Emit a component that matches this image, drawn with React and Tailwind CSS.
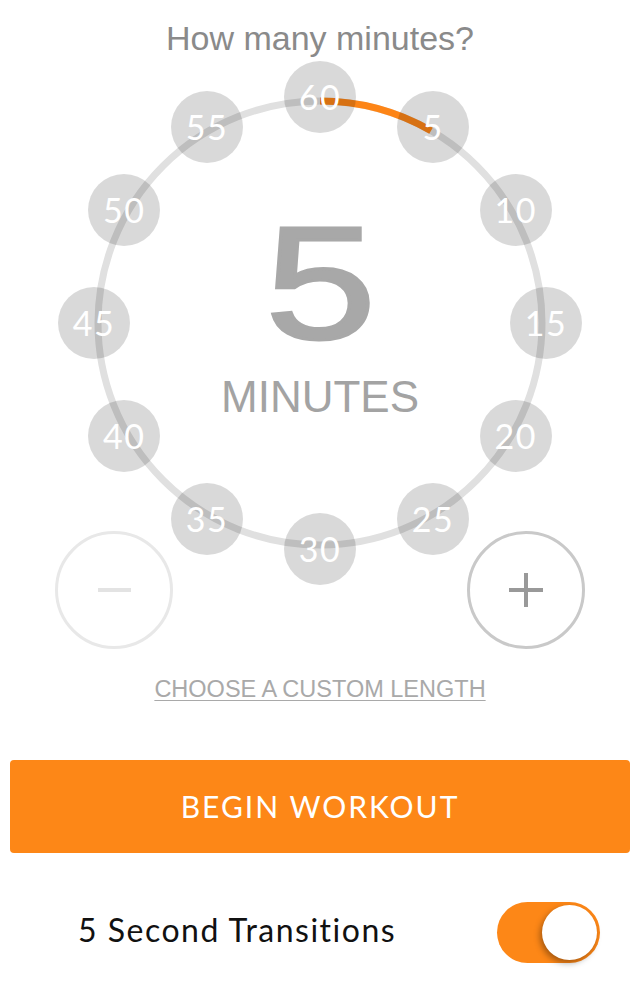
import React from 'react';

const MARKS = [60, 5, 10, 15, 20, 25, 30, 35, 40, 45, 50, 55];

// dial geometry (dial box coordinates)
const CX = 320;
const CY = 265;
const RING_R = 222;
const MARK_R = 226;

const Dial = ({ minutes }) => {
  const angle = (minutes / 60) * 2 * Math.PI;
  const endX = CX + RING_R * Math.sin(angle);
  const endY = CY - RING_R * Math.cos(angle);

  return (
    <div className="relative w-[640px] h-[530px] mx-auto flex flex-col items-center pt-[145px]">
      {/* Ring + progress arc */}
      <svg className="absolute inset-0" width="640" height="530" viewBox="0 0 640 530">
        <circle cx={CX} cy={CY} r={RING_R} fill="none" stroke="#e0e0e0" strokeWidth="7" />
        <path
          d={`M ${CX} ${CY - RING_R} A ${RING_R} ${RING_R} 0 0 1 ${endX} ${endY}`}
          fill="none"
          stroke="#fd8517"
          strokeWidth="7"
        />
      </svg>

      {/* Minute markers */}
      {MARKS.map((m, i) => {
        const a = (i / 12) * 2 * Math.PI;
        const x = CX + MARK_R * Math.sin(a) - 36;
        const y = CY - MARK_R * Math.cos(a) - 36;
        return (
          <div
            key={m}
            className="absolute w-[72px] h-[72px] rounded-full bg-black/15 flex items-center justify-center text-white text-[34px] leading-none tracking-[1.5px] font-['Lato',sans-serif]"
            style={{ left: x, top: y }}
          >
            {m}
          </div>
        );
      })}

      {/* Center readout */}
      <div className="relative scale-x-[1.25] [-webkit-text-stroke:3px_#a8a8a8] text-[160px] leading-none text-[#a8a8a8] font-['Liberation_Sans',Arial,sans-serif]">
        {minutes}
      </div>
      <div className="relative mt-[12px] text-[44px] leading-none text-[#a3a3a3] font-['Liberation_Sans',Arial,sans-serif]">
        MINUTES
      </div>
    </div>
  );
};

const App = () => {
  return (
    <div className="w-[640px] min-h-screen bg-white font-['Lato',sans-serif]">
      <h1 className="pt-[18px] text-center text-[34px] leading-[40px] text-[#8a8a8a] font-['Liberation_Sans',Arial,sans-serif]">
        How many minutes?
      </h1>

      <Dial minutes={5} />

      {/* Minus / plus */}
      <div className="relative -mt-[57px] px-[55px] flex justify-between">
        <button className="w-[118px] h-[118px] rounded-full border-[3px] border-[#e8e8e8] flex items-center justify-center">
          <span className="block w-[33px] h-[4px] bg-[#e3e3e3]" />
        </button>
        <button className="relative w-[118px] h-[118px] rounded-full border-[3px] border-[#c9c9c9] flex items-center justify-center">
          <span className="block w-[34px] h-[4px] bg-[#999999]" />
          <span className="absolute w-[4px] h-[34px] bg-[#999999]" />
        </button>
      </div>

      <div className="mt-[26px] text-center">
        <a className="text-[23.5px] leading-[28px] text-[#a9a9a9] underline underline-offset-[3px] decoration-[1px] font-['Liberation_Sans',Arial,sans-serif]">
          CHOOSE A CUSTOM LENGTH
        </a>
      </div>

      <div className="mt-[57px] px-[10px]">
        <button className="w-full h-[93px] rounded-[4px] bg-[#fd8717] text-white text-[30px] tracking-[2px] font-['Lato',sans-serif]">
          BEGIN WORKOUT
        </button>
      </div>

      <div className="mt-[49px] pl-[78px] pr-[40px] flex items-center justify-between">
        <span className="-mt-[6px] text-[32px] tracking-[1.5px] text-[#111111] font-['Lato',sans-serif]">5 Second Transitions</span>
        <div className="w-[103px] h-[61px] rounded-full bg-[#fd8717] flex items-center justify-end pr-[3px]">
          <div className="w-[55px] h-[55px] rounded-full bg-white shadow-[-2px_3px_6px_rgba(0,0,0,0.35)]" />
        </div>
      </div>
    </div>
  );
};

export default App;
